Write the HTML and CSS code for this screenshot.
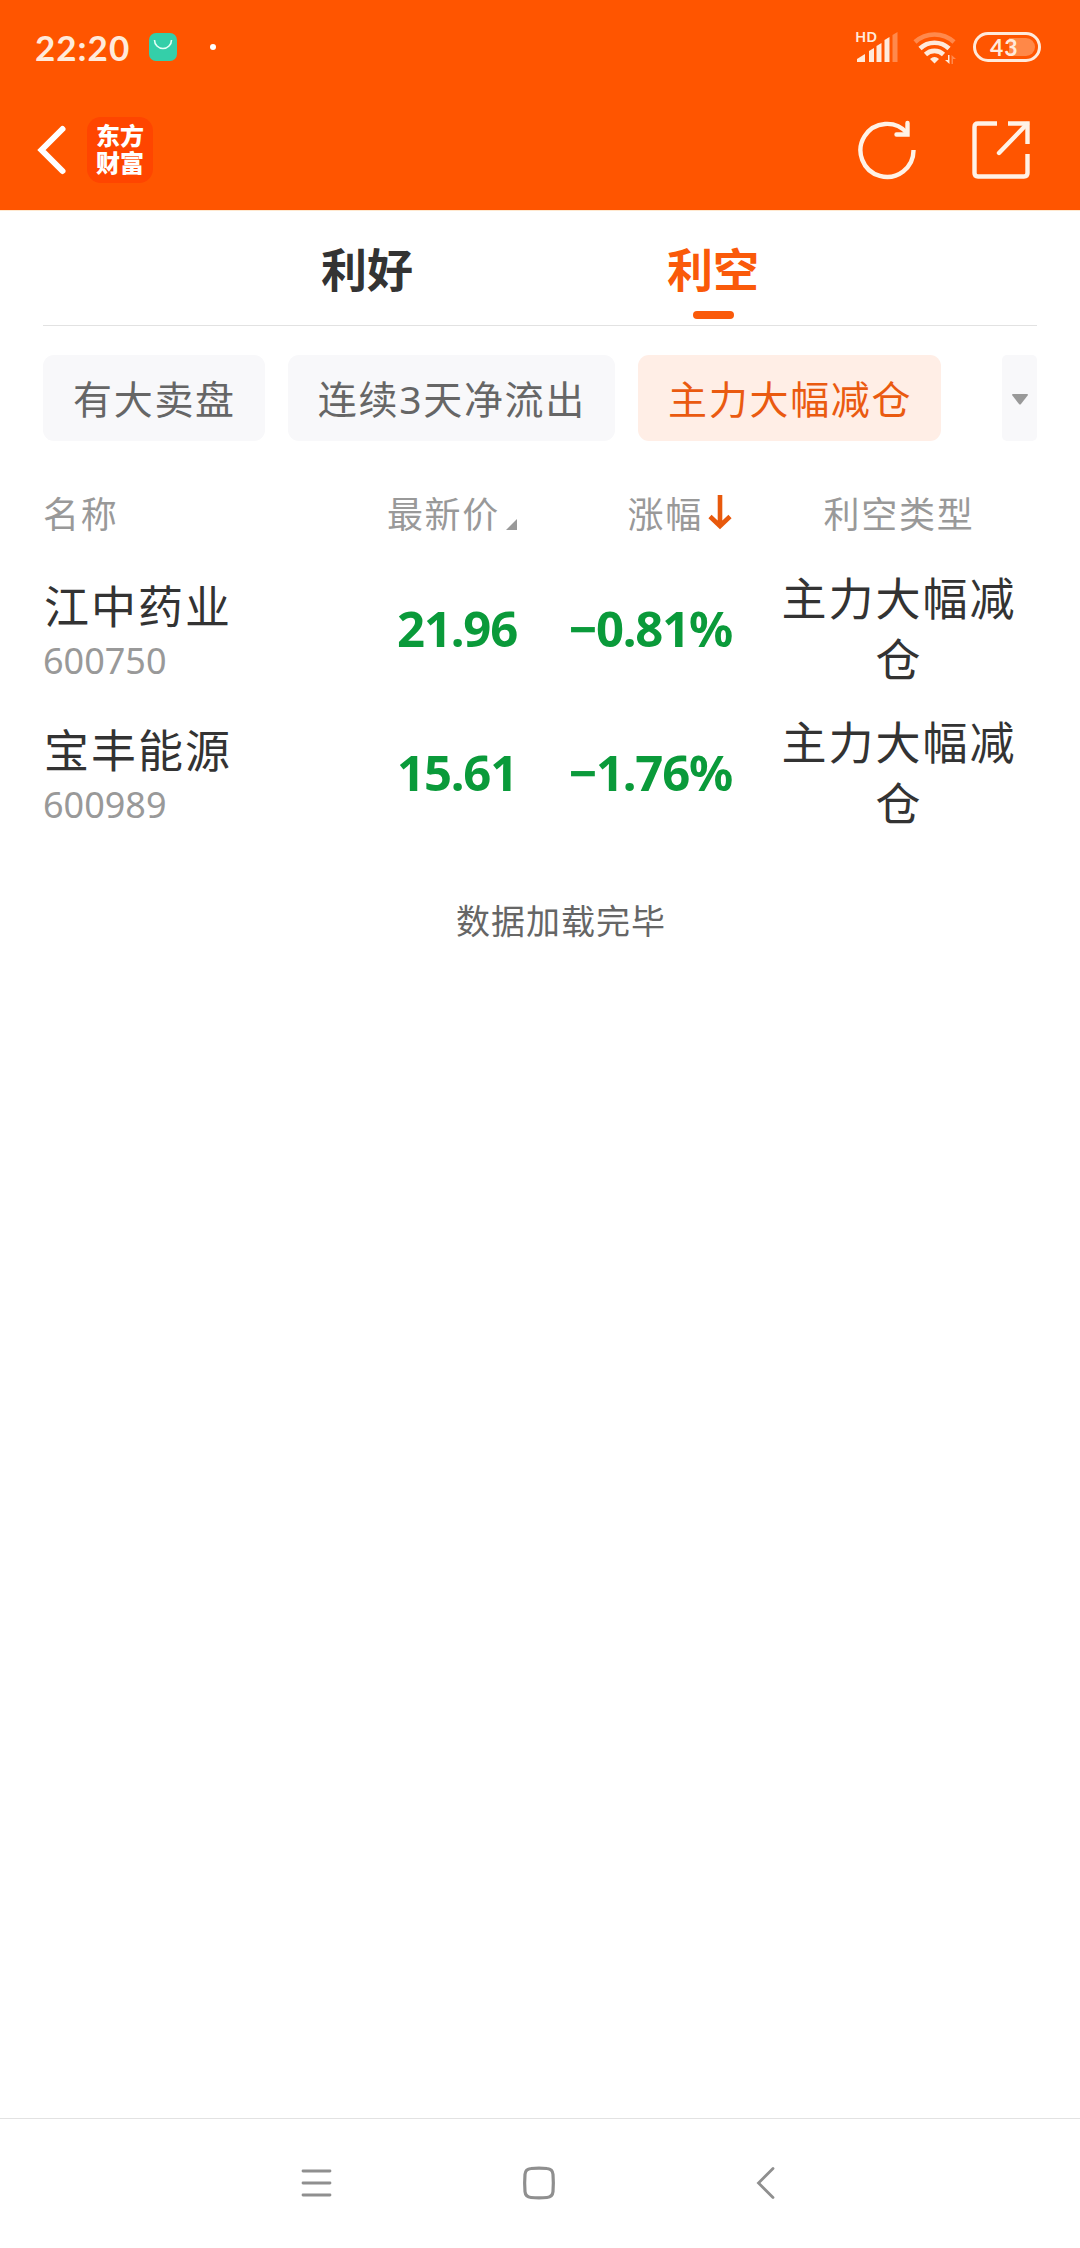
FILE: index.html
```html
<!DOCTYPE html>
<html lang="zh-CN">

<head>
    <meta charset="UTF-8">
    <meta name="viewport" content="width=device-width, initial-scale=1">
    <link rel="stylesheet" href="styles.css">
    <title>主力大幅减仓</title>
</head>

<body>
    <header>
        <div class="status">
            <span class="time">22:20</span>
            <svg class="bag" width="28" height="28" viewBox="0 0 28 28">
                <rect width="28" height="28" rx="7" fill="#34cfa9" />
                <path d="M5.500 7a8.500 8.500 0 0 0 17 0" fill="none" stroke="#e4fff6" stroke-width="1.600" />
            </svg>
            <span class="dot"></span>
            <div class="signals">
                <div class="cell">
                    <span class="hd">HD</span>
                    <svg width="42" height="30" viewBox="0 0 42 30">
                        <g fill="#ffeadb">
                            <path d="M1 30v-3l8-5v8z" />
                            <path d="M13 30V19l5-3v14z" />
                            <path d="M20.500 30V14l5-3v19z" />
                            <path d="M28.500 30V8l5-3v25z" />
                            <path d="M36.500 30V3l5-3v30z" opacity=".35" />
                        </g>
                    </svg>
                </div>
                <svg class="wifi" width="44" height="34" viewBox="0 0 44 34">
                    <g fill="none" stroke="#ffeadb" stroke-width="4.600">
                        <path d="M2 11a29 29 0 0 1 39 0" opacity=".35" />
                        <path d="M7 17.500a21 21 0 0 1 29 0" />
                        <path d="M12.500 23.500a13 13 0 0 1 18 0" />
                    </g>
                    <path d="M17 28q4.500-4 9 0l-4.500 4.500z" fill="#ffeadb" />
                    <path d="M36.500 24v9l-4.500-4h3v-5z" fill="#ffeadb" />
                    <path d="M38.500 33v-9l4.500 4h-3v5z" fill="#ffeadb" opacity=".35" />
                </svg>
                <div class="battery"><span>43</span></div>
            </div>
        </div>
        <div class="bar">
            <svg class="back" width="32" height="52" viewBox="0 0 32 52">
                <path d="M27.500 5L6.500 26l21 21" fill="none" stroke="#fff" stroke-width="6" stroke-linecap="round" />
            </svg>
            <div class="logo"><span>东方</span><span>财富</span></div>
            <svg class="refresh" width="60" height="60" viewBox="0 0 60 60">
                <g fill="none" stroke="#fff2e6" stroke-width="4.400" stroke-linecap="round">
                    <path d="M56.500 30A26.500 26.500 0 1 1 50 13" stroke-linecap="butt" />
                    <path d="M50.500 3v11.500H39.500" />
                </g>
            </svg>
            <svg class="share" width="60" height="60" viewBox="0 0 60 60">
                <g fill="none" stroke="#fff2e6" stroke-width="4.400">
                    <path d="M26 3.500H7q-3.500 0-3.500 3.500v46q0 3.500 3.500 3.500h46q3.500 0 3.500-3.500V34" />
                    <path d="M37 3.500h19.500V24" />
                    <path d="M56 4L28 33" stroke-linecap="round" />
                </g>
            </svg>
        </div>
    </header>

    <main>
        <nav class="tabs">
            <div class="tab">利好</div>
            <div class="tab active">利空</div>
        </nav>

        <div class="filters">
            <div class="chip">有大卖盘</div>
            <div class="chip">连续3天净流出</div>
            <div class="chip active">主力大幅减仓</div>
            <div class="more"><svg width="16" height="11" viewBox="0 0 16 11"><path d="M0 1q0-1 1-1h14q1 0 1 1L9 10q-1 1-2 0z" fill="#999" /></svg></div>
        </div>

        <div class="row head">
            <div>名称</div>
            <div class="num">最新价<svg class="corner" width="11" height="11" viewBox="0 0 11 11"><path d="M11 0v11H0z" fill="#999" /></svg></div>
            <div class="num">涨幅<svg class="down" width="24" height="36" viewBox="0 0 24 36"><path d="M12 1v31M2 22.500l10 9.500 10-9.500" fill="none" stroke="#e8590c" stroke-width="4.600" /></svg></div>
            <div class="type">利空类型</div>
        </div>
        <div class="row">
            <div>
                <div class="name">江中药业</div>
                <div class="code">600750</div>
            </div>
            <div class="num price">21.96</div>
            <div class="num price">−0.81%</div>
            <div class="type">主力大幅减仓</div>
        </div>
        <div class="row">
            <div>
                <div class="name">宝丰能源</div>
                <div class="code">600989</div>
            </div>
            <div class="num price">15.61</div>
            <div class="num price">−1.76%</div>
            <div class="type">主力大幅减仓</div>
        </div>
        <p class="end">数据加载完毕</p>
    </main>

    <footer>
        <svg width="36" height="36" viewBox="0 0 36 36">
            <path d="M4 5h27M4 17h27M4 29h27" stroke="#8f8f8f" stroke-width="2.800" stroke-linecap="round" />
        </svg>
        <svg width="36" height="36" viewBox="0 0 36 36">
            <path d="M9 2.500q8-.8 16 0 5.500.4 6 5.800.7 8.700 0 17.400-.5 5.400-6 5.800-8 .8-16 0-5.500-.4-6-5.800-.7-8.700 0-17.400.5-5.400 6-5.800z" fill="none" stroke="#8f8f8f" stroke-width="3.200" />
        </svg>
        <svg width="36" height="36" viewBox="0 0 36 36">
            <path d="M28 2.500L13.500 17 28 31.500" fill="none" stroke="#8f8f8f" stroke-width="2.800" stroke-linecap="round" />
        </svg>
    </footer>
</body>

</html>
```
FILE: styles.css
```css
* {
    box-sizing: border-box;
}

body {
    margin: 0;
    height: 2248px;
    display: flex;
    flex-direction: column;
    background: #fff;
    color: #333;
    font-family: "Noto Sans", "Noto Sans CJK SC", sans-serif;
}

svg {
    display: block;
    flex-shrink: 0;
}

header {
    height: 211px;
    background: #ff5500;
    border-bottom: 1px solid #ffe9d0;
}

.status {
    display: flex;
    align-items: center;
    height: 94px;
    padding: 0 39px 0 35px;
    color: #ffeadb;
}

.time {
    width: 114px;
    font-family: Lato, sans-serif;
    font-size: 35px;
    font-weight: 700;
    letter-spacing: 1px;
}

.dot {
    width: 6px;
    height: 6px;
    margin-left: 33px;
    border-radius: 3px;
    background: #fff;
}

.signals {
    display: flex;
    align-items: center;
    margin-left: auto;
}

.cell {
    position: relative;
}

.hd {
    position: absolute;
    left: -1px;
    top: -3px;
    font-size: 15px;
    line-height: 15px;
    font-weight: 600;
}

.wifi {
    margin: 2px 16px 0 15px;
}

.battery {
    position: relative;
    display: flex;
    align-items: center;
    width: 68px;
    height: 30px;
    padding-left: 14px;
    border: 3px solid #ffeadb;
    border-radius: 15px;
    font-family: Lato, sans-serif;
    font-size: 23px;
    font-weight: 700;
    letter-spacing: 1px;
}

.battery::before {
    content: "";
    position: absolute;
    right: 3px;
    top: 3px;
    width: 26px;
    height: 18px;
    border-radius: 0 9px 9px 0;
    background: #ff8848;
}

.battery span {
    position: relative;
}

.bar {
    display: flex;
    align-items: center;
    height: 112px;
    padding: 0 49px 0 35px;
}

.logo {
    display: flex;
    flex-direction: column;
    align-items: center;
    width: 66px;
    height: 66px;
    margin-left: 20px;
    padding-top: 5px;
    border-radius: 14px;
    background: #ff4500;
    color: #fff;
    font-size: 24px;
    line-height: 27px;
    font-weight: 900;
}

.refresh {
    margin: 0 54px 0 auto;
}

main {
    flex: 1;
    padding: 0 43px;
}

.tabs {
    display: flex;
    justify-content: center;
    height: 115px;
    border-bottom: 1px solid #e2e2e2;
}

.tab {
    width: 346px;
    padding-top: 26px;
    font-size: 46px;
    line-height: 64px;
    font-weight: 700;
    text-align: center;
}

.tab.active {
    color: #fa5a0a;
}

.tab.active::after {
    content: "";
    display: block;
    width: 41px;
    height: 8px;
    margin: 10px auto 0;
    border-radius: 4px;
    background: #fa5a0a;
}

.filters {
    display: flex;
    gap: 23px;
    margin-top: 29px;
    height: 86px;
}

.chip {
    padding: 0 29px 0 30px;
    border-radius: 11px;
    background: #f8f8fa;
    color: #666;
    font-size: 39px;
    line-height: 88px;
    height: 86px;
    letter-spacing: 1.7px;
    white-space: nowrap;
}

.chip.active {
    background: #ffeee6;
    color: #ea5a10;
}

.more {
    display: flex;
    align-items: center;
    justify-content: center;
    width: 35px;
    margin-left: auto;
    padding-top: 2px;
    border-radius: 5px;
    background: #f8f8fa;
}

.row {
    display: grid;
    grid-template-columns: 256px 218px 215px 305px;
    align-items: center;
    height: 144px;
}

.row.head {
    height: 116px;
    padding-top: 31px;
    color: #999;
    font-size: 36px;
    line-height: 50px;
    letter-spacing: 1.7px;
}

.num {
    display: flex;
    justify-content: flex-end;
    align-items: center;
}

.corner {
    margin: 19px 0 0 6px;
}

.down {
    margin: -5px 0 0 5px;
}

.name {
    padding: 3px 0 0 1px;
    font-size: 45px;
    line-height: 60px;
    letter-spacing: 2px;
}

.code {
    color: #999;
    font-size: 36px;
    line-height: 48px;
}

.price {
    padding-bottom: 2px;
    color: #0a9a3a;
    font-size: 49px;
    font-weight: 700;
    letter-spacing: -1.2px;
}

.type {
    padding: 0 17px 0 46px;
    font-size: 45px;
    line-height: 61px;
    letter-spacing: 2px;
    text-align: center;
}

.head .type {
    font-size: 36px;
    line-height: 50px;
    letter-spacing: 1.7px;
}

.end {
    margin: 51px 0 0;
    padding-left: 42px;
    color: #666;
    font-size: 34px;
    line-height: 50px;
    letter-spacing: 1px;
    text-align: center;
}

footer {
    display: flex;
    justify-content: center;
    align-items: center;
    gap: 187px;
    height: 130px;
    border-top: 1px solid #e2e2e2;
}
```
